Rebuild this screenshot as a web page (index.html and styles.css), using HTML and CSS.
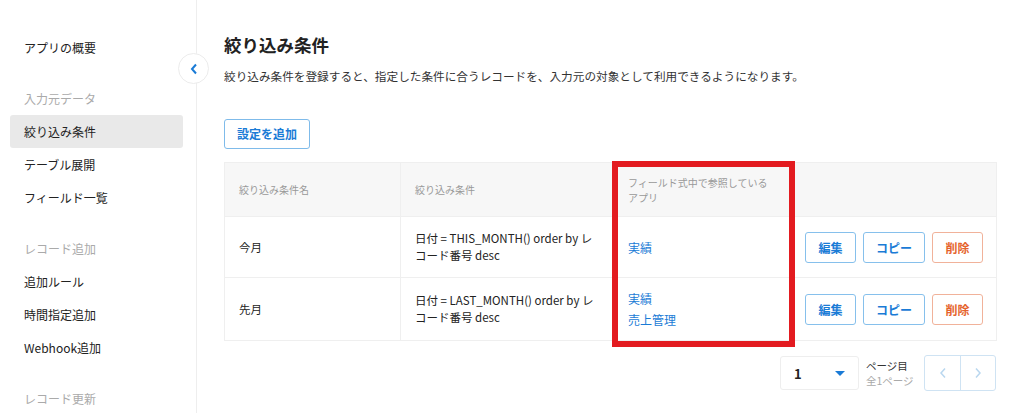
FILE: index.html
```html
<!DOCTYPE html>
<html lang="ja">
<head>
    <meta charset="UTF-8">
    <meta name="viewport" content="width=device-width, initial-scale=1.0">
    <title>絞り込み条件</title>
    <link rel="stylesheet" href="styles.css">
</head>
<body>
    <div class="layout">
        <div class="side">
            <a class="side-item" href="##">アプリの概要</a>

            <div class="side-label">入力元データ</div>
            <a class="side-item active" href="##">絞り込み条件</a>
            <a class="side-item" href="##">テーブル展開</a>
            <a class="side-item" href="##">フィールド一覧</a>

            <div class="side-label">レコード追加</div>
            <a class="side-item" href="##">追加ルール</a>
            <a class="side-item" href="##">時間指定追加</a>
            <a class="side-item" href="##">Webhook追加</a>

            <div class="side-label">レコード更新</div>

            <a class="collapse" href="javascript:;">
                <svg width="8" height="12" viewBox="0 0 8 12"><path d="M6 1.5 L2 6 L6 10.5" fill="none" stroke="#1a7bd6" stroke-width="2"/></svg>
            </a>
        </div>

        <div class="main">
            <h1 class="title">絞り込み条件</h1>
            <p class="desc">絞り込み条件を登録すると、指定した条件に合うレコードを、入力元の対象として利用できるようになります。</p>
            <a class="btn-add" href="javascript:;">設定を追加</a>

            <div class="table-wrap">
                <table class="list">
                    <colgroup>
                        <col class="c1">
                        <col class="c2">
                        <col class="c3">
                        <col class="c4">
                    </colgroup>
                    <thead>
                        <tr>
                            <th>絞り込み条件名</th>
                            <th>絞り込み条件</th>
                            <th>フィールド式中で参照しているアプリ</th>
                            <th></th>
                        </tr>
                    </thead>
                    <tbody>
                        <tr class="r1">
                            <td>今月</td>
                            <td>日付 = THIS_MONTH() order by レコード番号 desc</td>
                            <td><a class="app" href="##">実績</a></td>
                            <td>
                                <div class="ops">
                                    <a class="op" href="javascript:;">編集</a>
                                    <a class="op wide" href="javascript:;">コピー</a>
                                    <a class="op del" href="javascript:;">削除</a>
                                </div>
                            </td>
                        </tr>
                        <tr class="r2">
                            <td>先月</td>
                            <td>日付 = LAST_MONTH() order by レコード番号 desc</td>
                            <td>
                                <a class="app" href="##">実績</a>
                                <a class="app" href="##">売上管理</a>
                            </td>
                            <td>
                                <div class="ops">
                                    <a class="op" href="javascript:;">編集</a>
                                    <a class="op wide" href="javascript:;">コピー</a>
                                    <a class="op del" href="javascript:;">削除</a>
                                </div>
                            </td>
                        </tr>
                    </tbody>
                </table>
                <!-- 注目枠 -->
                <div class="mark"></div>
            </div>

            <div class="pager">
                <div class="page-select">
                    <span>1</span>
                    <i class="caret"></i>
                </div>
                <div class="page-info">
                    <div>ページ目</div>
                    <div class="total">全1ページ</div>
                </div>
                <div class="page-nav">
                    <a href="javascript:;">
                        <svg width="8" height="12" viewBox="0 0 8 12"><path d="M6 1.5 L2 6 L6 10.5" fill="none" stroke="#b9d7ef" stroke-width="1.5"/></svg>
                    </a>
                    <a href="javascript:;">
                        <svg width="8" height="12" viewBox="0 0 8 12"><path d="M2 1.5 L6 6 L2 10.5" fill="none" stroke="#b9d7ef" stroke-width="1.5"/></svg>
                    </a>
                </div>
            </div>
        </div>
    </div>
</body>
</html>
```

FILE: styles.css
```css
* {
    padding: 0px;
    margin: 0px;
    box-sizing: border-box;
}

a {
    text-decoration: none;
}

body {
    font-family: "Noto Sans CJK JP", "Noto Sans", sans-serif;
    color: #333;
    background: #fff;
}

.layout {
    display: flex;
    height: 413px;
    overflow: hidden;
}

/* サイドメニュー */
.side {
    width: 197px;
    flex-shrink: 0;
    border-right: 1px solid #eeeeee;
    padding: 31px 13px 0 10px;
    position: relative;
}

.side-item {
    display: block;
    height: 33px;
    line-height: 33px;
    padding-left: 14px;
    font-size: 12px;
    color: #222;
    border-radius: 3px;
}

.side-item.active {
    background: #e9e9e9;
}

.side-label {
    height: 33px;
    line-height: 33px;
    padding-left: 14px;
    margin-top: 18px;
    font-size: 12px;
    color: #aaa;
}

.collapse {
    position: absolute;
    left: 178px;
    top: 53px;
    width: 31px;
    height: 31px;
    border-radius: 50%;
    border: 1px solid #ececec;
    background: #fff;
    display: flex;
    align-items: center;
    justify-content: center;
}

/* メイン */
.main {
    flex: 1;
    padding: 32px 0 0 27px;
}

.title {
    font-size: 17.5px;
    line-height: 26px;
    font-weight: bold;
    color: #222;
}

.desc {
    margin-top: 9px;
    font-size: 11.65px;
    line-height: 18px;
    color: #333;
}

.btn-add {
    display: inline-block;
    margin-top: 34px;
    width: 86px;
    height: 30px;
    line-height: 28px;
    text-align: center;
    border: 1px solid #7fbbea;
    border-radius: 3px;
    color: #1a7bd6;
    font-size: 12px;
    font-weight: bold;
}

.table-wrap {
    margin-top: 13px;
    width: 772px;
    position: relative;
}

.list {
    width: 772px;
    border-collapse: collapse;
    table-layout: fixed;
}

.list .c1 { width: 176px; }
.list .c2 { width: 213px; }
.list .c3 { width: 177px; }
.list .c4 { width: 206px; }

.list th,
.list td {
    border: 1px solid #efefef;
    padding: 0 12px 0 14px;
    text-align: left;
    vertical-align: middle;
}

.list thead tr {
    height: 54px;
    background: #f7f7f7;
}

.list th {
    padding-right: 16px;
    font-size: 10px;
    font-weight: normal;
    line-height: 15px;
    color: #999;
}

.list td {
    font-size: 11.5px;
    line-height: 17px;
    color: #222;
}

.list .r1 { height: 61px; }
.list .r2 { height: 63px; }

.app {
    display: block;
    color: #1a7bd6;
    font-size: 12px;
    line-height: 17px;
}

.app + .app {
    margin-top: 4px;
}

.ops {
    display: flex;
    gap: 7px;
}

.op {
    display: block;
    width: 51px;
    height: 31px;
    line-height: 29px;
    text-align: center;
    border: 1px solid #86c0ec;
    border-radius: 3px;
    color: #1a7bd6;
    font-weight: bold;
    font-size: 12px;
}

.op.wide {
    width: 62px;
}

.op.del {
    border-color: #f1b29a;
    color: #e5632c;
}

.mark {
    position: absolute;
    left: 388px;
    top: -1px;
    width: 183px;
    height: 186px;
    border: 6px solid #e31b20;
    pointer-events: none;
}

/* ページ送り */
.pager {
    width: 772px;
    margin-top: 14px;
    display: flex;
    justify-content: flex-end;
    align-items: center;
}

.page-select {
    width: 79px;
    height: 34px;
    border: 1px solid #eee;
    border-radius: 3px;
    display: flex;
    align-items: center;
    justify-content: space-between;
    padding: 0 13px 0 13px;
    font-size: 13px;
    font-weight: bold;
    color: #222;
}

.caret {
    width: 0;
    height: 0;
    border-left: 5px solid transparent;
    border-right: 5px solid transparent;
    border-top: 5px solid #1a7bd6;
}

.page-info {
    margin-left: 7px;
    font-size: 10.5px;
    line-height: 15px;
    color: #333;
    width: 58px;
}

.page-info .total {
    color: #aaa;
}

.page-nav {
    display: flex;
    height: 36px;
    border: 1px solid #cfe3f3;
    border-radius: 3px;
}

.page-nav a {
    width: 35px;
    display: flex;
    align-items: center;
    justify-content: center;
}

.page-nav a + a {
    border-left: 1px solid #cfe3f3;
}
```
